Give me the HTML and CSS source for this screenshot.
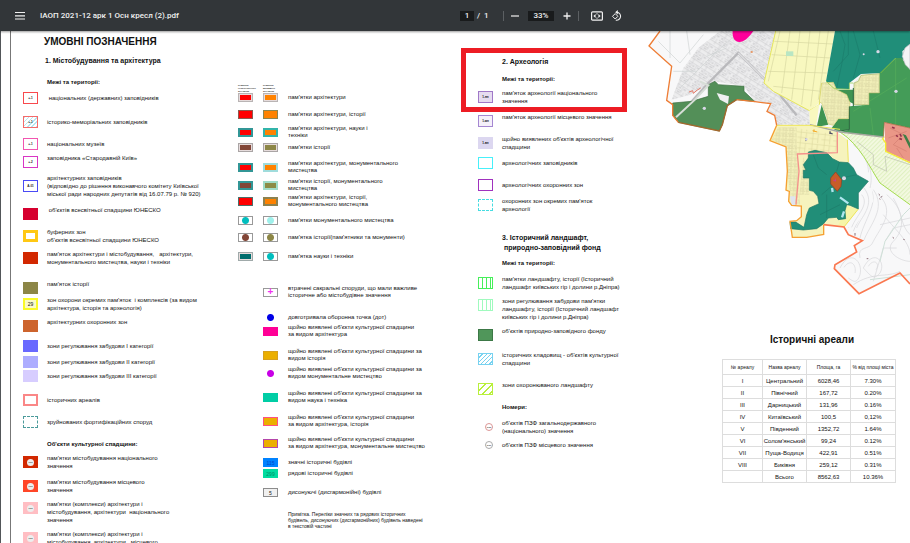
FILE: index.html
```html
<!DOCTYPE html>
<html lang="uk">
<head>
  <meta charset="UTF-8">
  <meta name="viewport" content="width=device-width, initial-scale=1.0">
  <title>ІАОП 2021-12 арк 1 Осн кресл (2).pdf</title>
  <link rel="stylesheet" href="styles.css">
</head>
<body>
  <!-- Toolbar -->
  <header class="toolbar">
    <div class="toolbar-left">
      <button class="icon-btn" aria-label="Меню">
        <svg width="12" height="10" viewBox="0 0 12 10"><path d="M1 1.5h10M1 4.8h10M1 8h10" stroke="#f1f1f1" stroke-width="1.2"/></svg>
      </button>
      <span class="file-name">ІАОП 2021-12 арк 1 Осн кресл (2).pdf</span>
    </div>
    <div class="toolbar-center">
      <input class="page-input" type="text" value="1" aria-label="Сторінка">
      <span class="page-total">/&nbsp; 1</span>
      <span class="divider"></span>
      <button class="icon-btn" aria-label="Зменшити">
        <svg width="10" height="10" viewBox="0 0 10 10"><path d="M1 5h8" stroke="#f1f1f1" stroke-width="1.2"/></svg>
      </button>
      <input class="zoom-input" type="text" value="33%" aria-label="Масштаб">
      <button class="icon-btn" aria-label="Збільшити">
        <svg width="10" height="10" viewBox="0 0 10 10"><path d="M1.5 5h7M5 1.5v7" stroke="#f1f1f1" stroke-width="1.3"/></svg>
      </button>
      <span class="divider"></span>
      <button class="icon-btn fit" aria-label="За розміром сторінки">
        <svg width="12" height="10" viewBox="0 0 12 10"><rect x="0.6" y="0.8" width="10.8" height="8.4" rx="1" fill="none" stroke="#f1f1f1" stroke-width="1.2"/><path d="M2.4 5l2.2-1.9v3.8zM9.6 5l-2.2-1.9v3.8zM5.5 2.2h1v1.4h-1zM5.5 6.4h1v1.4h-1z" fill="#f1f1f1"/></svg>
      </button>
      <button class="icon-btn" aria-label="Повернути">
        <svg width="12" height="12" viewBox="0 0 12 12"><path d="M6 2.2a4 4 0 1 1-1.2 7.9" fill="none" stroke="#f1f1f1" stroke-width="1.1"/><path d="M6.8 0v4.4L4.2 2.2z" fill="#f1f1f1"/><path d="M4.2 3.6l2.7 2.7L4.2 9 1.5 6.3z" fill="none" stroke="#f1f1f1"/></svg>
      </button>
    </div>
  </header>

  <main class="sheet">
    <!-- Column 1 -->
    <section class="col col-arch">
      <h1>УМОВНІ ПОЗНАЧЕННЯ</h1>
      <h2 class="g8">1. Містобудування та архітектура</h2>
      <h3 class="g12">Межі та території:</h3>
      <div class="row g6"><i class="sw" style="--line:#f8494d">●-1</i><p>&nbsp;національних (державних) заповідників</p></div>
      <div class="row g12"><i class="sw hatch-blue" style="--line:#f56a6a">●-1</i><p>історико-меморіальних заповідників</p></div>
      <div class="row g10"><i class="sw" style="--line:#f255b0">●-1</i><p>національних музеїв</p></div>
      <div class="row top g4"><i class="sw" style="--line:#d936c4">●-2</i><p>заповідника «Стародавній Київ»</p></div>
      <div class="row g6"><i class="sw" style="--line:#4a4af5">А-01</i><p>архітектурних заповідників<br>(відповідно до рішення виконавчого комітету Київської<br>міської ради народних депутатів від 16.07.79 р. № 920)</p></div>
      <div class="row top g8"><i class="sw" style="--fill:#d6002f;--line:#d6002f"></i><p>&nbsp;об'єктів всесвітньої спадщини ЮНЕСКО</p></div>
      <div class="row g8"><i class="sw thick" style="--line:#ffc814"></i><p>буферних зон<br>об'єктів всесвітньої спадщини ЮНЕСКО</p></div>
      <div class="row g6"><i class="sw" style="--fill:#d22800;--line:#d22800"></i><p>пам'яток архітектури і містобудування, &nbsp; архітектури,<br>монументального мистецтва, науки і техніки</p></div>
      <div class="row top g14"><i class="sw" style="--fill:#8c8646;--line:#8c8646"></i><p>пам'яток історії</p></div>
      <div class="row g2"><i class="sw thin2 big-text" style="--fill:#fafac8;--line:#fafa28">29</i><p>зон охорони окремих пам'яток &nbsp;і комплексів (за видом<br>архітектура, історія та археологія)</p></div>
      <div class="row top g6"><i class="sw" style="--fill:#cd642d;--line:#cd642d"></i><p>архітектурних охоронних зон</p></div>
      <div class="row g8"><i class="sw" style="--fill:#6969ff;--line:#6969ff"></i><p>зони регулювання забудови I категорії</p></div>
      <div class="row g4"><i class="sw" style="--fill:#adadff;--line:#adadff"></i><p>зони регулювання забудови II категорії</p></div>
      <div class="row g2"><i class="sw" style="--fill:#d7cdff;--line:#d7cdff"></i><p>зони регулювання забудови III категорії</p></div>
      <div class="row g12"><i class="sw thin2" style="--line:#fa8787"></i><p>історичних ареалів</p></div>
      <div class="row g10"><i class="sw dashed" style="--line:#4b9b9b"></i><p>зруйнованих фортифікаційних споруд</p></div>
      <h3 class="g12">Об'єкти культурної спадщини:</h3>
      <div class="row top g6"><i class="sw dot" style="--fill:#d22800;--line:#d22800"><b>1-01</b></i><p>пам'ятки містобудування національного<br>значення</p></div>
      <div class="row top g8"><i class="sw dot" style="--fill:#ff4628;--line:#ff4628"><b>1-01</b></i><p>пам'ятки містобудування місцевого<br>значення</p></div>
      <div class="row top g6"><i class="sw dot" style="--fill:#ffbec3;--line:#ffbec3"><b>1-01</b></i><p>пам'ятки (комплекси) архітектури і<br>містобудування, архітектури &nbsp;національного<br>значення</p></div>
      <div class="row top g6"><i class="sw dot" style="--fill:#ffbec3;--line:#ffbec3"><b>1-01</b></i><p>пам'ятки (комплекси) архітектури і<br>містобудування, архітектури &nbsp; місцевого<br>значення</p></div>
    </section>

    <!-- Column 2 -->
    <section class="col col-pairs">
      <div class="pair pair-head"><span>ПАМ'ЯТКИ<br>НАЦІОНАЛЬНОГО<br>ЗНАЧЕННЯ</span><span>ПАМ'ЯТКИ<br>МІСЦЕВОГО<br>ЗНАЧЕННЯ</span></div>
      <div class="pair"><i class="sw lite" style="--fill:#ff0000;--line:#b9b4b4"></i><i class="sw lite" style="--fill:#ff8200;--line:#b9b4b4"></i><p>пам'ятки архітектури</p></div>
      <div class="pair g8"><i class="sw" style="--fill:#ff0000;--line:#8c5a50"></i><i class="sw" style="--fill:#ff8200;--line:#8c8650"></i><p>пам'ятки архітектури, історії</p></div>
      <div class="pair g6"><i class="sw thin2" style="--fill:#ff0000;--line:#329696"></i><i class="sw thin2" style="--fill:#ff8200;--line:#32b4aa"></i><p>пам'ятки архітектури, науки і<br>техніки</p></div>
      <div class="pair g4"><i class="sw lite" style="--fill:#824637;--line:#aaa5a5"></i><i class="sw lite" style="--fill:#8c8646;--line:#aaa5a5"></i><p>пам'ятки історії</p></div>
      <div class="pair g8"><i class="sw thin2" style="--fill:#ff0000;--line:#329696"></i><i class="sw thin2" style="--fill:#ff8200;--line:#a0dcdc"></i><p>пам'ятки архітектури, монументального<br>мистецтва</p></div>
      <div class="pair g4"><i class="sw thin2" style="--fill:#824637;--line:#329696"></i><i class="sw thin2" style="--fill:#8c8c46;--line:#a0dcc8"></i><p>пам'ятки історії, монументального<br>мистецтва</p></div>
      <div class="pair g2"><i class="sw" style="--fill:#ff0000;--line:#4b6e69"></i><i class="sw thin2" style="--fill:#ff8200;--line:#8c8250"></i><p>пам'ятки архітектури, історії,<br>монументального мистецтва</p></div>
      <div class="pair g8"><i class="sw ball" style="--ball:#00bebe"></i><i class="sw ball" style="--ball:#a0f0eb"></i><p>пам'ятки монументального мистецтва</p></div>
      <div class="pair g8"><i class="sw ball" style="--ball:#824637"></i><i class="sw ball" style="--ball:#8c8646"></i><p>пам'ятка історії(пам'ятники та монументи)</p></div>
      <div class="pair g10"><i class="sw lite" style="--fill:#006e6e;--line:#a0aaaa"></i><i class="sw ball" style="--ball:#00bebe"></i><p>пам'ятка науки і техніки</p></div>

      <div class="pair g24"><i></i><i class="sw cross">+</i><p>втрачені сакральні споруди, що мали важливе<br>історичне або містобудівне значення</p></div>
      <div class="pair g14"><i></i><i class="sw ball plain" style="--ball:#0000e6"></i><p>довготривала оборонна точка (дот)</p></div>
      <div class="pair g2"><i></i><i class="sw" style="--fill:#ff0096;--line:#ff0096"></i><p>щойно виявлені об'єкти культурної спадщини<br>за видом архітектура</p></div>
      <div class="pair g10"><i></i><i class="sw" style="--fill:#ebaf00;--line:#d7a01e"></i><p>щойно виявлені об'єкти культурної спадщини за<br>видом історія</p></div>
      <div class="pair g4"><i></i><i class="sw ball plain" style="--ball:#c800e6"></i><p>щойно виявлені об'єкти культурної спадщини за<br>видом монументальне мистецтво</p></div>
      <div class="pair g10"><i></i><i class="sw" style="--fill:#00cda5;--line:#00cda5"></i><p>щойно виявлені об'єкти культурної спадщини за<br>видом наука і техніка</p></div>
      <div class="pair g10"><i></i><i class="sw" style="--fill:#ebaf00;--line:#ff5082"></i><p>щойно виявлені об'єкти культурної спадщини<br>за видом архітектура, історія</p></div>
      <div class="pair g8"><i></i><i class="sw" style="--fill:#ebaf00;--line:#b446aa"></i><p>щойно виявлені об'єкти культурної спадщини<br>за видом архітектура, монументальне мистецтво</p></div>
      <div class="pair g8"><i></i><i class="sw big-text num-blue" style="--fill:#0082ff;--line:#0082ff">115</i><p>значні історичні будівлі</p></div>
      <div class="pair g2"><i></i><i class="sw big-text num-green" style="--fill:#00dca0;--line:#00dca0">299</i><p>рядові історичні будівлі</p></div>
      <div class="pair g10"><i></i><i class="sw big-text" style="--fill:#f0f0f0;--line:#8c8c8c">5</i><p>дисонуючі (дисгармонійні) будівлі</p></div>
      <div class="pair g14"><i></i><i></i><p class="note">Примітка. Переліки значних та рядових історичних<br>будівель, дисонуючих (дисгармонійних) будівель наведені<br>в текстовій частині</p></div>
    </section>

    <!-- Column 3 -->
    <section class="col col-archeo">
      <div class="mark"></div>
      <h2>2. Археологія</h2>
      <h3 class="g8">Межі та території:</h3>
      <div class="row g6"><i class="sw" style="--fill:#e6dcf0;--line:#a078c8">1-нп</i><p>пам'яток археології національного<br>значення</p></div>
      <div class="row top g8"><i class="sw" style="--fill:#f5f0fa;--line:#a587d2">1-мп</i><p>пам'яток археології місцевого значення</p></div>
      <div class="row g8"><i class="sw" style="--fill:#dcd7f0;--line:#dcd7f0">1-вп</i><p>щойно виявлених об'єктів археологічної<br>спадщини</p></div>
      <div class="row g6"><i class="sw" style="--line:#46f0fa"></i><p>археологічних заповідників</p></div>
      <div class="row g10"><i class="sw" style="--line:#a032be"></i><p>археологічних охоронних зон</p></div>
      <div class="row g6"><i class="sw dashed" style="--line:#46dce1"></i><p>охоронних зон окремих пам'яток<br>археології</p></div>

      <h2 class="g20">3. Історичний ландшафт,<br>&nbsp;природно-заповідний фонд</h2>
      <h3 class="g6">Межі та території:</h3>
      <div class="row g8"><i class="sw bars" style="--line:#46f05a"></i><p>пам'ятки ландшафту, історії (Історичний<br>ландшафт київських гір і долини р.Дніпра)</p></div>
      <div class="row top g6"><i class="sw bars" style="--line:#a0fabe"></i><p>зони регулювання забудови пам'ятки<br>ландшафту, історії (Історичний ландшафт<br>київських гір і долини р.Дніпра)</p></div>
      <div class="row top g6"><i class="sw" style="--fill:#50965a;--line:#3c7846"></i><p>об'єктів природно-заповідного фонду</p></div>
      <div class="row g10"><i class="sw slash" style="--line:#78d2f0"></i><p>історичних кладовищ - об'єктів культурної<br>спадщини</p></div>
      <div class="row top g14"><i class="sw slash wide" style="--line:#b9f03c"></i><p>зони охоронюваного ландшафту</p></div>
      <h3 class="g8">Номери:</h3>
      <div class="row g8"><i class="ring" style="--line:#dc9696">0-00</i><p>об'єктів ПЗФ загальнодержавного<br>(національного) значення</p></div>
      <div class="row g6"><i class="ring" style="--line:#aaaaaa">0-01</i><p>об'єктів ПЗФ місцевого значення</p></div>
    </section>

    <!-- Map and areas table -->
    <section class="col-map">
      <svg class="map" viewBox="0 9 810 804" role="img" aria-label="Фрагмент карти">
        <defs>
          <pattern id="streets" width="44" height="38" patternUnits="userSpaceOnUse" patternTransform="rotate(32)">
            <path d="M0 5h44M0 19h30M12 0v38M29 5v22M0 31h44M38 19v19" stroke="#c4c4c6" stroke-width="1.4" fill="none"/>
            <path d="M4 9h5v5H4zM16 10h8v4h-8zM33 9h7v4h-7zM3 23h6v4H3zM17 23h9v4h-9z" fill="#cfcfd1"/>
          </pattern>
          <pattern id="quarters" width="36" height="32" patternUnits="userSpaceOnUse" patternTransform="rotate(6)">
            <path d="M0 4h36M10 0v32M26 4v28M0 20h26" stroke="#d8d49a" stroke-width="1.6" fill="none"/>
          </pattern>
          <pattern id="dense" width="20" height="18" patternUnits="userSpaceOnUse" patternTransform="rotate(3)">
            <path d="M2 3h7v4H2zM12 2h5v7h-5zM3 11h5v4H3zM11 12h7v3h-7z" fill="none" stroke="#cbc595" stroke-width="1.3"/>
          </pattern>
          <pattern id="meadow" width="9" height="9" patternUnits="userSpaceOnUse" patternTransform="rotate(45)">
            <path d="M2 0v9" stroke="#cfe9a8" stroke-width="2"/>
          </pattern>
        </defs>

        <!-- city ground -->
        <path d="M60 9L27 54L95 115L80 217L98 230L262 233L290 215L392 227L381 250L404 262L410 292L600 312L625 400L612 597L625 620L667 638L643 653L650 672L585 710L583 722L657 797L780 735L810 768V9z" fill="#f8f8f9"/>
        <path d="M175 60L240 9H408L372 165L400 190L508 248L510 292H410L404 262L381 250L392 227L345 221L312 175L225 160L150 200L95 215L130 120z" fill="#ededee"/>
        <path d="M175 60L240 9H408L372 165L400 190L508 248L510 292H410L404 262L381 250L392 227L345 221L312 175L225 160L150 200L95 215L130 120z" fill="url(#streets)"/>
        <path d="M55 40L120 105L190 20M90 9V90M140 9L150 80M100 130H170M120 180L225 75L300 9M200 85L260 60" fill="none" stroke="#cfd3d3" stroke-width="2"/>
        <path d="M110 270L205 165L295 75L410 190L470 262" fill="none" stroke="#b9b9bc" stroke-width="7"/>
        <path d="M295 75L410 190L455 280" fill="none" stroke="#dedee0" stroke-width="4"/>

        <!-- contour lines -->
        <g fill="none" stroke="#d6d6da" stroke-width="2">
          <path d="M640 350C700 400 690 450 670 500C650 550 640 570 625 600"/>
          <path d="M650 390C690 420 680 460 680 500C680 550 650 580 640 610"/>
          <path d="M690 480C720 520 670 580 660 630M700 485C740 540 690 590 672 636"/>
          <path d="M715 500C770 550 720 600 700 640C690 670 650 650 660 690"/>
          <path d="M600 720C630 660 670 700 660 740C650 770 640 760 625 750"/>
          <path d="M612 718C632 690 650 710 645 735M670 720C700 660 740 700 720 735C700 760 690 740 670 720"/>
          <path d="M685 715C700 690 722 705 708 725M640 770C700 730 740 750 780 730"/>
          <path d="M740 500C790 540 800 600 760 640C730 670 780 700 810 700"/>
          <path d="M760 510C790 560 780 590 810 620M730 560C760 600 810 640 810 680"/>
          <path d="M720 590L810 570M735 640L760 600L810 590M700 760L730 660H770"/>
        </g>
        <path d="M720 700L735 640L790 560L810 540M690 755L810 740" fill="none" stroke="#cfe0d8" stroke-width="3"/>
        <path d="M716 498l4 4M722 508l5 -3M718 512l3 2M758 628l4 3M790 634l4 1M680 692h5M645 615v8" stroke="#8c6e78" stroke-width="3"/>

        <!-- fields -->
        <path d="M407 9H585L558 160L545 165L538 225L508 248L400 190L372 165z" fill="#f8f8bf"/>
        <path d="M420 9L385 160M450 9L425 195M480 9L455 215M510 9L485 230M540 9L512 235M565 9L535 215M403 40L580 48M395 80L572 90M385 130L560 135M400 175L545 190" fill="none" stroke="#d6d6a0" stroke-width="2"/>
        <path d="M438 70h22v14h-22z" fill="#b9e6c3"/>
        <path d="M407 9L372 165L400 190L508 248L538 230L545 165" fill="none" stroke="#e6e65a" stroke-width="3"/>

        <!-- forest -->
        <path d="M585 9H810V50L787 70L790 95L767 90L722 135L663 138L628 165V183L583 182L558 160z" fill="#208e79"/>
        <path d="M600 9L615 50L605 110L590 180M640 9L660 80L640 150M625 9V80L580 130M700 9L720 90" fill="none" stroke="#1b7b6b" stroke-width="2"/>
        <path d="M767 90H785L810 125V300L733 283L730 327L600 312L628 305V235L687 230V195H718V135z" fill="#449c58"/>
        <path d="M640 250L800 150M767 92V300M690 240L700 320" fill="none" stroke="#56ad5b" stroke-width="2"/>
        <path d="M810 48L795 60L787 85L796 110L810 124z" fill="#f4f4f6" stroke="#b9b9be" stroke-width="2"/>
        <path d="M583 185H640V227L625 220L600 198zM545 230L565 290L530 297zM575 300L595 272H628V305L590 308z" fill="#3f9452"/>
        <path d="M508 248L538 228L528 295L510 292z" fill="#f8f8bf"/>
        <path d="M545 165L580 163L590 185L620 200L630 225L625 272H595L580 292L565 288L560 265L545 225L538 222z" fill="#f4f2bb" stroke="#d2cf6e" stroke-width="2"/>
        <path d="M663 142L718 137V195H687V230H642V165L655 160z" fill="#f4f2bb" stroke="#9bb45a" stroke-width="2"/>
        <path d="M545 165L580 163L590 185L620 200L630 225L625 272H595L580 292L565 288L560 265L545 225zM663 142L718 137V195H687V230H642V165z" fill="url(#dense)"/>
        <path d="M558 160L583 182L628 184V165H640M767 90L722 135" fill="none" stroke="#8cc83c" stroke-width="2"/>
        <path d="M640 180V235M628 235V305L590 310" fill="none" stroke="#28643c" stroke-width="3"/>

        <!-- left woods -->
        <path d="M98 225L155 220L205 205V170L225 160L235 170L312 175V190L345 221L290 215L262 233L247 290L238 309L115 283L98 262z" fill="#538f58" stroke="#3c6e41" stroke-width="2"/>
        <path d="M230 195L250 200L267 205L264 228L240 215z" fill="#f0f0f2"/>
        <path d="M108 268L165 215L205 172L180 160" fill="none" stroke="#d7ded7" stroke-width="6"/>
        <path d="M147 192L158 188L160 196L172 186L182 180" fill="none" stroke="#e67864" stroke-width="3"/>
        <path d="M332 72h6" stroke="#e67832" stroke-width="4"/>

        <!-- lower district -->
        <path d="M410 292H520L590 312L622 335L625 402L655 543L612 597L551 590V619L500 628H457L450 580L470 578L484 566V534L455 532L446 520L448 490L438 486L442 430L438 357L390 338z" fill="#f6f3bd"/>
        <path d="M415 298H470V345L480 530H455L442 430L438 357L395 335zM490 385L478 500H508L500 430z" fill="url(#dense)"/>
        <path d="M470 300L592 320V370L472 376z" fill="url(#quarters)"/>
        <path d="M625 330L625 402L655 440L685 460L655 495V543L612 597L640 600L700 520L690 440z" fill="#f8f8f9"/>
        <path d="M650 350C690 400 700 440 690 480M665 500C690 530 650 560 635 598M672 480C710 530 660 570 650 600" fill="none" stroke="#d6d6da" stroke-width="2"/>
        <path d="M655 543L612 597L595 590L610 560V530z" fill="#f6f5a8"/>
        <path d="M450 505h16v26h-12z" fill="#dfe4f0"/>
        <path d="M505 372L525 367L560 374L578 392L598 402L625 404L640 420L650 440L685 460L655 495V543L630 532L620 530L615 548L617 572L595 575L590 568L565 570L550 588L530 602L490 606L452 602L450 582H467L492 598L500 560L508 540L537 527L533 505L520 490L508 487V450H490V427H498L490 410L505 390z" fill="#218e78" stroke="#1b7564" stroke-width="2"/>
        <path d="M520 380L535 420L560 440M598 402L590 430M650 440L605 450M545 500L580 470M540 560L600 530M560 500V570" fill="none" stroke="#1c7a68" stroke-width="2"/>
        <path d="M587 432L605 455L603 475L592 490L572 468V450z" fill="#c75c28" stroke="#963c1e" stroke-width="2"/>
        <path d="M580 458h8M586 452v8" stroke="#c83c8c" stroke-width="3"/>
        <path d="M600 508L625 526M576 480L578 492M612 550L606 568" stroke="#afe6ef" stroke-width="7"/>

        <!-- meadow and salmon quarter -->
        <path d="M600 312L730 327L737 370L810 402V530L720 465C690 420 660 350 600 312z" fill="#f4f9e2"/>
        <path d="M600 312L730 327L737 370L810 402V530L720 465C690 420 660 350 600 312z" fill="url(#meadow)"/>
        <path d="M600 312C660 350 690 420 720 465L810 530" fill="none" stroke="#a5dc50" stroke-width="3"/>
        <path d="M650 340L700 380V410L740 430L735 385L810 410" fill="none" stroke="#b9bfae" stroke-width="2"/>
        <path d="M733 283L810 300V402L737 370L735 330z" fill="#ea9787"/>
        <path d="M750 300L790 320L760 350L800 370M745 330L800 310M770 360L790 390" fill="none" stroke="#d27d70" stroke-width="2"/>
        <path d="M788 318L798 322L810 345V362z" fill="#3f7d46"/>
        <path d="M768 322l6 4M780 318l4 8M778 332l8 2M756 298l8 3" stroke="#96324b" stroke-width="5"/>
        <path d="M733 326L728 332L737 345V370L810 404" fill="none" stroke="#f5eb32" stroke-width="4"/>
        <path d="M733 283L810 300M733 283L730 326" fill="none" stroke="#a06432" stroke-width="2"/>

        <!-- borders -->
        <path d="M510 290L600 312L730 327" fill="none" stroke="#a8a8a0" stroke-width="4"/>
        <path d="M410 292H510L600 304M622 335L625 402M655 543L612 597" fill="none" stroke="#eee65a" stroke-width="3"/>
        <path d="M592 312V374L472 378L477 430L468 530" fill="none" stroke="#f5918c" stroke-width="4"/>
        <path d="M60 9L27 54L95 115L80 217L98 230V262L115 283" fill="none" stroke="#ee7d35" stroke-width="4"/>
        <path d="M115 283L238 309L247 290L262 233L290 215" fill="none" stroke="#a5692d" stroke-width="4"/>
        <path d="M290 215L345 221L392 227L381 250L404 262L410 292" fill="none" stroke="#ee7d35" stroke-width="4"/>
        <path d="M410 292L390 338L438 357L442 430L438 486L448 490L446 520L455 532L484 534V566L470 578L450 580L457 628H500L551 619V590" fill="none" stroke="#f5a032" stroke-width="4"/>
        <path d="M551 590L612 597L625 620L667 638L643 653L650 672L585 710L583 722L657 797L780 735L810 768" fill="none" stroke="#fa7850" stroke-width="5"/>
        <path d="M278 9H340C325 30 312 42 298 42C285 42 276 30 278 9z" fill="#ff009b"/>
        <path d="M518 308l14 4M522 304v8" stroke="#f5aa28" stroke-width="3"/>
        <path d="M568 314l10 4M498 330v8M570 310v8" stroke="#505064" stroke-width="4"/>
        <g fill="#d7d7e6"><circle cx="193" cy="241" r="5"/><circle cx="714" cy="71" r="5"/><circle cx="768" cy="190" r="5"/><circle cx="612" cy="451" r="6"/><circle cx="671" cy="79" r="3"/><circle cx="499" cy="334" r="4"/></g>
      </svg>

      <h2 class="areas-title">Історичні ареали</h2>
      <table class="areas">
        <colgroup><col class="c-num"><col class="c-name"><col class="c-area"><col></colgroup>
        <thead>
          <tr><th>№ ареалу</th><th>Назва ареалу</th><th>Площа, га</th><th>% від площі міста</th></tr>
        </thead>
        <tbody>
          <tr><td>I</td><td>Центральний</td><td>6028,46</td><td>7.30%</td></tr>
          <tr><td>II</td><td>Північний</td><td>167,72</td><td>0.20%</td></tr>
          <tr><td>III</td><td>Дарницький</td><td>131,96</td><td>0.16%</td></tr>
          <tr><td>IV</td><td>Китаївський</td><td>100,5</td><td>0,12%</td></tr>
          <tr><td>V</td><td>Південний</td><td>1352,72</td><td>1.64%</td></tr>
          <tr><td>VI</td><td>Солом'янський</td><td>99,24</td><td>0.12%</td></tr>
          <tr><td>VII</td><td>Пуща-Водиця</td><td>422,91</td><td>0.51%</td></tr>
          <tr><td>VIII</td><td>Биківня</td><td>259,12</td><td>0.31%</td></tr>
          <tr><td></td><td>Всього</td><td>8562,63</td><td>10.36%</td></tr>
        </tbody>
      </table>
    </section>
  </main>
</body>
</html>
```
FILE: styles.css
```css
* {
  box-sizing: border-box;
}

body {
  margin: 0;
  height: 100vh;
  overflow: hidden;
  display: flex;
  flex-direction: column;
  background: #525659;
  color: #111;
  font-family: "Liberation Sans", Arial, sans-serif;
  font-size: 6px;
  line-height: 8px;
}

h1, h2, h3, p {
  margin: 0;
  white-space: nowrap;
}

/* Toolbar */
.toolbar {
  flex: none;
  display: grid;
  grid-template-columns: 460fr 450fr;
  align-items: center;
  height: 31px;
  background: #323639;
  color: #f1f1f1;
  font-family: Roboto, sans-serif;
  font-size: 8px;
  font-weight: 500;
  box-shadow: 0 1px 2px rgba(0, 0, 0, 0.4);
  z-index: 1;
}

.toolbar-left, .toolbar-center {
  display: flex;
  align-items: center;
}

.toolbar-left {
  gap: 14px;
  padding-left: 14px;
}

.icon-btn {
  display: flex;
  padding: 0;
  border: none;
  background: none;
  cursor: pointer;
}

.page-input, .zoom-input {
  height: 10px;
  padding: 0;
  border: none;
  background: #191b1c;
  color: #f1f1f1;
  font: inherit;
  text-align: center;
}

.page-input {
  width: 14px;
}

.page-total {
  width: 12px;
  margin: 0 8px 0 3px;
  white-space: nowrap;
}

.zoom-input {
  width: 26px;
  margin: 0 8px;
}

.divider {
  width: 1px;
  height: 10px;
  margin: 0 6px;
  background: #5c6063;
}

.fit {
  margin: 0 8px 0 6px;
}

/* Sheet */
.sheet {
  flex: 1;
  min-height: 0;
  overflow: hidden;
  display: grid;
  grid-template-columns: 215fr 240fr 162fr 270fr;
  align-items: start;
  margin-left: 1px;
  padding-left: 22px;
  background: linear-gradient(#777, #777) 9px 0 / 1px 100% no-repeat #fff;
}

.col, .col-map {
  min-width: 0;
}

.col {
  position: relative;
}

.col-arch {
  padding-top: 5px;
}

.col-pairs {
  padding-top: 53px;
}

.col-archeo {
  padding-top: 26px;
}

h1 {
  padding-left: 21px;
  font-size: 10px;
  line-height: 12px;
}

h2 {
  padding-left: 22px;
  font-size: 7px;
  line-height: 10px;
}

h3 {
  padding-left: 24px;
  font-size: 6px;
  line-height: 8px;
}

.col-archeo h2 {
  padding-left: 24px;
}

.row {
  display: grid;
  grid-template-columns: 15px 1fr;
  column-gap: 9px;
  align-items: center;
}

.row.top {
  align-items: start;
}

.row.top .sw {
  margin-top: 2px;
}

.pair {
  display: grid;
  grid-template-columns: 15px 15px 1fr;
  column-gap: 10px;
  align-items: center;
  line-height: 7px;
}

.pair-head {
  font-size: 2px;
  font-weight: bold;
  line-height: 3px;
  white-space: nowrap;
}

.note {
  font-size: 5px;
  line-height: 6px;
}

/* Vertical gaps */
.g2 { margin-top: 2px; }
.g4 { margin-top: 4px; }
.g6 { margin-top: 6px; }
.g8 { margin-top: 8px; }
.g10 { margin-top: 10px; }
.g12 { margin-top: 12px; }
.g14 { margin-top: 14px; }
.g20 { margin-top: 20px; }
.g24 { margin-top: 24px; }

/* Legend swatches */
.sw {
  display: flex;
  align-items: center;
  justify-content: center;
  height: 12px;
  border: 1px solid var(--line, #999);
  background: var(--fill, #fff);
  font-size: 3px;
  font-style: normal;
  font-weight: bold;
  line-height: 4px;
}

.pair .sw {
  height: 9px;
}

.thick {
  border-width: 3px;
}

.thin2 {
  border-width: 2px;
}

.dashed {
  border-style: dashed;
}

.lite {
  box-shadow: inset 0 0 0 1px #e6dcdc;
}

.big-text {
  font-size: 5px;
  font-weight: normal;
}

.num-blue {
  color: #0046c8;
}

.num-green {
  color: #008c64;
}

.hatch-blue {
  background: repeating-linear-gradient(135deg, #b4e6f0 0 1px, #fff 1px 3px);
}

.bars {
  background: repeating-linear-gradient(90deg, #fff 0 3px, var(--line) 3px 4px);
}

.slash {
  background: repeating-linear-gradient(135deg, #fff 0 2px, var(--line) 2px 3px);
}

.slash.wide {
  background: repeating-linear-gradient(135deg, #fff 0 4px, var(--line) 4px 5px);
}

.dot b {
  width: 7px;
  height: 7px;
  border-radius: 50%;
  background: #eee;
  font-size: 2px;
  line-height: 7px;
  text-align: center;
}

.ball {
  background: radial-gradient(circle, var(--ball) 0 3px, #fff 4px) no-repeat;
}

.ball.plain {
  border-color: #fff;
}

.cross {
  color: #f032f0;
  font-size: 10px;
}

.ring {
  justify-self: end;
  width: 8px;
  height: 8px;
  border: 1px solid var(--line);
  border-radius: 50%;
  font-size: 2px;
  font-style: normal;
  font-weight: bold;
  line-height: 6px;
  text-align: center;
}

/* Red highlight around the archeology block */
.mark {
  position: absolute;
  top: 17px;
  left: -17px;
  width: 166px;
  height: 64px;
  border: 5px solid #ed1c24;
}

/* Map and table */
.map {
  display: block;
  width: 100%;
}

.areas-title {
  margin-top: 35px;
  padding-left: 74px;
  font-size: 10px;
  line-height: 12px;
  text-align: center;
}

.areas {
  width: 174px;
  margin: 13px 14px 0 auto;
  border-collapse: collapse;
  table-layout: fixed;
  text-align: center;
}

.c-num {
  width: 40px;
}

.c-name, .c-area {
  width: 44px;
}

.areas th, .areas td {
  height: 12px;
  padding: 0;
  border: 1px solid #ddd;
  white-space: nowrap;
}

.areas th {
  height: 15px;
  font-size: 5px;
  font-weight: normal;
}
```
